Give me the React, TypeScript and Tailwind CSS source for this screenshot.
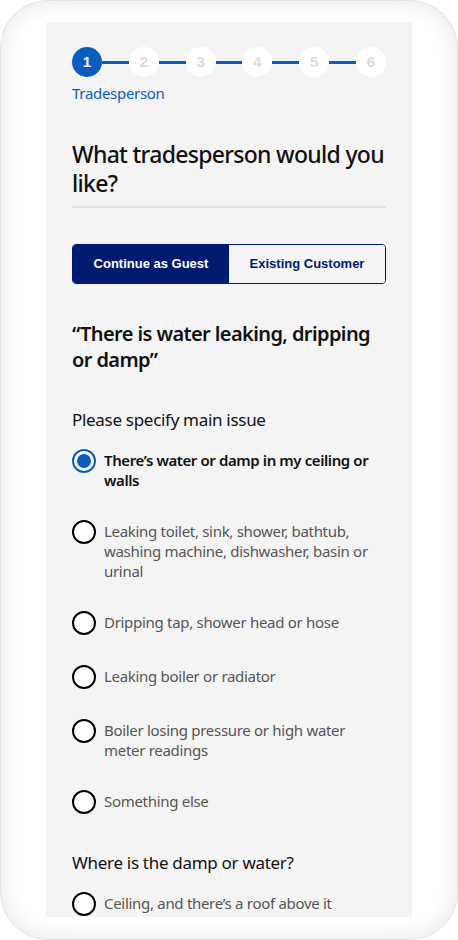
import React from "react";

const steps = [1, 2, 3, 4, 5, 6];

const issues = [
  "There’s water or damp in my ceiling or walls",
  "Leaking toilet, sink, shower, bathtub, washing machine, dishwasher, basin or urinal",
  "Dripping tap, shower head or hose",
  "Leaking boiler or radiator",
  "Boiler losing pressure or high water meter readings",
  "Something else",
];

const Radio = ({ label, checked }: { label: string; checked?: boolean }) => {
  return (
    <div className="flex items-start gap-2">
      {checked ? (
        <span className="w-6 h-6 shrink-0 rounded-full border-2 border-[#0b5cbf] bg-white flex items-center justify-center">
          <span className="w-[14px] h-[14px] rounded-full bg-[#0b5cbf]" />
        </span>
      ) : (
        <span className="w-6 h-6 shrink-0 rounded-full border-2 border-black bg-white" />
      )}
      <span
        className={
          checked
            ? "pt-[1px] text-[15px] leading-5 tracking-[-0.4px] font-semibold text-[#111]"
            : "pt-[1px] text-[15px] leading-5 tracking-[-0.3px] text-[#555]"
        }
      >
        {label}
      </span>
    </div>
  );
};

export default function App() {
  return (
    <div className="w-[458px] h-[940px] bg-white" style={{ fontFamily: '"Noto Sans", sans-serif' }}>
      <div className="w-full h-full rounded-[48px] border border-[#e2e2e2] shadow-[inset_0_0_24px_rgba(0,0,0,0.1)] flex justify-center pt-[21px]">
        <div className="w-[366px] h-[895px] bg-[#f4f4f4] overflow-hidden px-[26px] pt-[25px]">
          {/* stepper */}
          <div className="flex items-center">
            {steps.map((n, i) => (
              <React.Fragment key={n}>
                {i > 0 && <div className="flex-1 h-[3px] bg-[#0b5cbf]" />}
                <div
                  className={
                    n === 1
                      ? "w-[30px] h-[30px] rounded-full bg-[#0b5cbf] text-white flex items-center justify-center text-[15px] font-bold"
                      : "w-[30px] h-[30px] rounded-full bg-white text-[#dcdcdc] flex items-center justify-center text-[15px] font-bold"
                  }
                  style={{ fontFamily: '"Liberation Sans", Arial, sans-serif' }}
                >
                  {n}
                </div>
              </React.Fragment>
            ))}
          </div>
          <p className="mt-[6px] text-[15px] leading-5 tracking-[-0.3px] text-[#0b5cbf]">Tradesperson</p>

          <h1 className="mt-[37px] text-[23px] leading-[29px] tracking-[-0.7px] font-medium text-[#111] pb-[8px] border-b-2 border-[#e0e0e0]">
            What tradesperson would you like?
          </h1>

          {/* guest / customer toggle */}
          <div
            className="mt-[36px] flex h-10 rounded-[4px] border border-[#001a72] overflow-hidden text-[13px] font-bold"
            style={{ fontFamily: '"Liberation Sans", Arial, sans-serif' }}
          >
            <div className="flex-1 bg-[#001a72] text-white flex items-center justify-center">Continue as Guest</div>
            <div className="flex-1 bg-[#f5f5f5] text-[#001a72] flex items-center justify-center">Existing Customer</div>
          </div>

          <h2 className="mt-[37px] text-[20px] leading-[26px] tracking-[-0.6px] font-semibold text-[#111]">
            “There is water leaking, dripping or damp”
          </h2>

          <p className="mt-[35px] text-[17px] leading-6 tracking-[-0.3px] text-[#111]">Please specify main issue</p>

          <div className="mt-[17px] flex flex-col gap-[30px]">
            {issues.map((t, i) => (
              <Radio key={t} label={t} checked={i === 0} />
            ))}
          </div>

          <p className="mt-[37px] text-[17px] leading-6 tracking-[-0.3px] text-[#111]">Where is the damp or water?</p>
          <div className="mt-[17px]">
            <Radio label="Ceiling, and there’s a roof above it" />
          </div>
        </div>
      </div>
    </div>
  );
}
